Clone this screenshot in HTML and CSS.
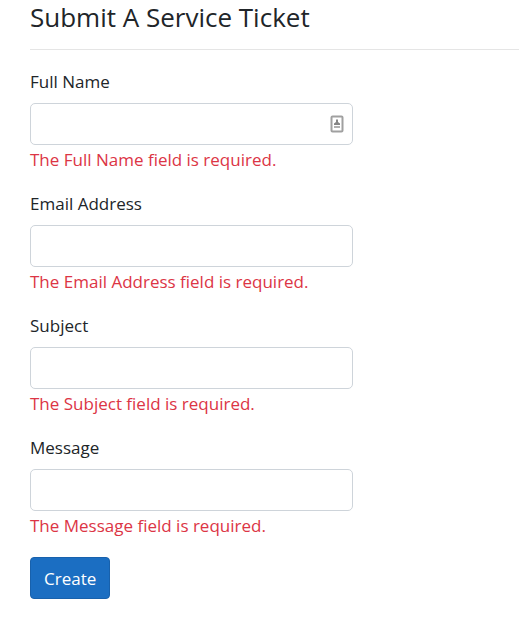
FILE: index.html
```html
<!DOCTYPE html>
<html lang="en">
<head>
<meta charset="utf-8">
<meta name="viewport" content="width=device-width, initial-scale=1">
<title>Submit A Service Ticket</title>
<link rel="stylesheet" href="styles.css">
</head>
<body>
<main class="page">
  <h1 class="title">Submit A Service Ticket</h1>
  <hr class="rule">
  <form class="form">
    <div class="group">
      <label class="label" for="name">Full Name</label>
      <div class="field">
        <input class="control" id="name" type="text" aria-describedby="name-error">
        <svg class="autofill" viewBox="0 0 14 18" aria-hidden="true">
          <rect x="1.500" y="1.500" width="11" height="15" rx="1" fill="#fff" stroke="#a0a0a0" stroke-width="2"/>
          <path d="M6 4.500H8V7L10 8.500V10H4V8.500L6 7Z" fill="#858585"/>
          <path d="M4 12H10" stroke="#b0b0b0" stroke-width="2"/>
        </svg>
      </div>
      <span class="error" id="name-error">The Full Name field is required.</span>
    </div>
    <div class="group">
      <label class="label" for="email">Email Address</label>
      <input class="control" id="email" type="text" aria-describedby="email-error">
      <span class="error" id="email-error">The Email Address field is required.</span>
    </div>
    <div class="group">
      <label class="label" for="subject">Subject</label>
      <input class="control" id="subject" type="text" aria-describedby="subject-error">
      <span class="error" id="subject-error">The Subject field is required.</span>
    </div>
    <div class="group">
      <label class="label" for="message">Message</label>
      <input class="control" id="message" type="text" aria-describedby="message-error">
      <span class="error" id="message-error">The Message field is required.</span>
    </div>
    <button class="create" type="button">Create</button>
  </form>
</main>
</body>
</html>
```
FILE: styles.css
```css
* { box-sizing: border-box; }
body {
  margin: 0;
  background: #fff;
  color: #212529;
  font-family: "Segoe UI", "Open Sans", "Noto Sans", sans-serif;
  font-size: 17px;
  line-height: 26px;
}
.page { padding-left: 30px; }
.title {
  margin: 0 0 15px;
  font-size: 26px;
  font-weight: 400;
  line-height: 34px;
}
.rule {
  margin: 0 0 19px;
  border: 0;
  border-top: 1px solid #e5e5e5;
}
.form {
  width: 66%;
  min-width: 280px;
}
.group { margin-bottom: 18px; }
.label { display: block; margin-bottom: 8px; }
.field { position: relative; }
.control {
  display: block;
  width: 100%;
  height: 42px;
  padding: 6px 14px;
  border: 1px solid #ced4da;
  border-radius: 5px;
  background: #fff;
  color: #495057;
  font: inherit;
}
.autofill {
  position: absolute;
  top: 12px;
  right: 9px;
  width: 14px;
  height: 18px;
}
.error { display: block; padding-top: 2px; color: #dc3545; }
.create {
  padding: 8px 13px 6px;
  border: 1px solid #1861ac;
  border-radius: 4px;
  background: #1b6ec2;
  color: #fff;
  font: inherit;
}
```
